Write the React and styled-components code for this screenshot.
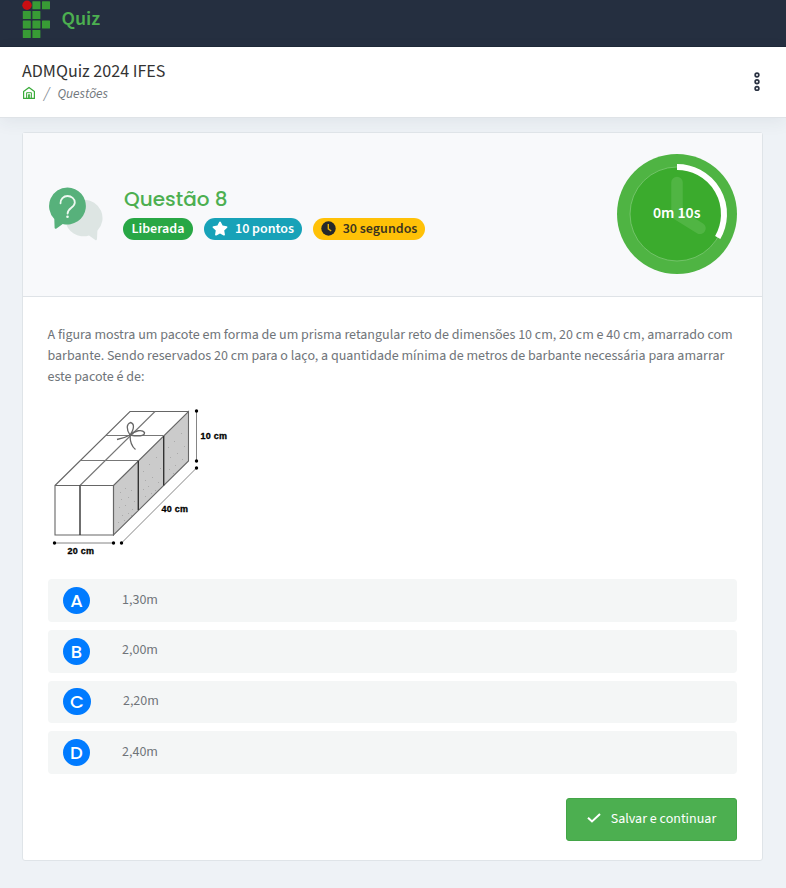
import React from "react";
import styled, { createGlobalStyle } from "styled-components";

const Global = createGlobalStyle`
  *, *::before, *::after { box-sizing: border-box; }
  body {
    margin: 0;
    background: #eef2f6;
    color: #6f7479;
    font-family: "Source Sans 3", "Noto Sans CJK SC", sans-serif;
    font-size: 14px;
    line-height: 21px;
  }
  svg { display: block; flex: none; }
`;

const Page = styled.div`
  min-height: 888px;
  display: flex;
  flex-direction: column;
`;

const TopBar = styled.header`
  height: 47px;
  padding: 0 0 0 22px;
  display: flex;
  align-items: flex-start;
  gap: 10.5px;
  background: #252f40;
  border-bottom: 1px solid #1f2838;
`;

const Brand = styled.span`
  margin-top: 4px;
  color: #4caf50;
  font-size: 20px;
  font-weight: 600;
  line-height: 30px;
`;

const TitleBar = styled.div`
  height: 71px;
  padding: 12px 22px 0 22px;
  display: flex;
  justify-content: space-between;
  background: #fff;
  border-bottom: 1px solid #dfe3e7;
  box-shadow: 0 4px 16px rgba(40, 60, 80, 0.07);
`;

const Title = styled.h1`
  margin: 0;
  color: #333;
  font-size: 18px;
  font-weight: 400;
  line-height: 26px;
`;

const Crumbs = styled.nav`
  display: flex;
  align-items: center;
  height: 18px;
  font-size: 13.5px;
  line-height: 16px;
  font-style: italic;
  color: #74797e;

  svg { margin-top: -2px; }
`;

const Slash = styled.span`
  margin: -2px 8px 0 8px;
  font-size: 16px;
  color: #868e96;
`;

const MenuButton = styled.button`
  width: 14px;
  height: 22px;
  margin-top: 12px;
  padding: 0;
  border: 0;
  background: none;
`;

const Card = styled.main`
  width: 741px;
  height: 729px;
  margin: 14px 0 0 21.5px;
  display: flex;
  flex-direction: column;
  background: #fff;
  border: 1px solid #dfe4e8;
  border-radius: 3px;
`;

const CardHeader = styled.div`
  height: 164px;
  flex: none;
  padding: 0 24.5px 0 26px;
  display: flex;
  align-items: center;
  background: #f8f9fb;
  border-bottom: 1px solid #dfe3e7;
`;

const HeaderRow = styled.div`
  flex: 1;
  margin-top: -1px;
  display: flex;
  align-items: center;
`;

const Heading = styled.div`
  flex: 1;
  margin: 0 0 2px 20.5px;
`;

const QuestionTitle = styled.h2`
  margin: 0 0 7px 1px;
  color: #4caf50;
  font-family: "Poppins", sans-serif;
  font-size: 20px;
  font-weight: 500;
  line-height: 24px;
`;

const Badges = styled.div`
  display: flex;
  gap: 11px;
`;

const Badge = styled.span`
  height: 22px;
  width: ${(p) => p.$width};
  display: flex;
  align-items: center;
  justify-content: center;
  gap: 7px;
  border-radius: 11px;
  background: ${(p) => p.$bg};
  color: ${(p) => p.$fg || "#fff"};
  font-size: 14px;
  font-weight: 600;
  line-height: 22px;
  white-space: nowrap;
`;

const Body = styled.div`
  padding: 27.5px 25px 0;
  display: flex;
  flex-direction: column;
`;

const Statement = styled.p`
  margin: 0;
  letter-spacing: -0.01px;
`;

const Figure = styled.div`
  margin: 17.5px 0 19px;
`;

const Options = styled.div`
  display: flex;
  flex-direction: column;
  gap: 8px;
`;

const Option = styled.div`
  height: 42.75px;
  padding-left: 15.5px;
  display: flex;
  align-items: center;
  gap: 32px;
  border-radius: 4px;
  background: #f4f6f6;
`;

const Letter = styled.span`
  height: 27px;
  min-width: 27px;
  padding: 0 7px;
  display: flex;
  align-items: center;
  justify-content: center;
  border-radius: 14px;
  background: #007bff;
  color: #fff;
  font-family: "Poppins", sans-serif;
  font-size: 18px;
  font-weight: 500;
  line-height: 27px;
`;

const Answer = styled.span`
  margin-top: -0.5px;
`;

const SaveButton = styled.button`
  align-self: flex-end;
  width: 171px;
  height: 43px;
  margin-top: 24px;
  padding: 0 0 1px 1px;
  display: flex;
  align-items: center;
  justify-content: center;
  gap: 10px;
  border: 1px solid #43a547;
  border-radius: 3px;
  background: #4caf50;
  color: #fff;
  font: inherit;

  svg { margin-bottom: 2px; }
`;

const Logo = () => (
  <svg width="29" height="40" viewBox="22 0 29 40" fill="#389b35">
    <circle cx="27" cy="5.3" r="4.7" fill="#c90e12" />
    {[[1, 1.3], [2, 1.3], [0, 11], [1, 11], [0, 20.5], [1, 20.5], [2, 20.5], [0, 30], [1, 30]].map(([c, y]) => (
      <rect key={`${c}-${y}`} x={22.8 + c * 9.6} y={y} width="8" height="8" rx=".5" />
    ))}
  </svg>
);

const HomeIcon = () => (
  <svg width="14" height="14" viewBox="0 0 14 14" fill="none" stroke="#3aab3a" strokeWidth="1.2" strokeLinejoin="round">
    <path d="M1.600 5.400 7 1.400l5.400 4v7H1.600z" />
    <path d="M4.600 12.300V6.700h4.800v5.600M6.400 12V8.700h1.300V12" strokeWidth="1" />
  </svg>
);

const DotsIcon = () => (
  <svg width="14" height="22" viewBox="0 0 14 22" fill="none" stroke="#2a3242" strokeWidth="1.7">
    <circle cx="7" cy="4" r="1.85" />
    <circle cx="7" cy="10.7" r="1.85" />
    <circle cx="7" cy="17.4" r="1.85" />
  </svg>
);

const ChatIcon = () => (
  <svg width="54" height="54" viewBox="49 188 54 54">
    <path d="M84 200.700a18.300 18.300 0 0 1 13.400 31l-.4 8.400q-.2 1.600-1.700.8L89 236.400a18.300 18.300 0 1 1-5-35.700z" fill="#dde5e3" />
    <path d="M67.500 188.500a18.500 18.500 0 1 1-4.800 36.400l-6.200 4.600q-1.700 1-1.900-.8l-.3-8.800a18.500 18.500 0 0 1 13.200-31.400z" fill="#57b17b" />
    <path d="M60.500 204.300c-.2-4.200 3-7.300 7-7.300s7.300 2.900 7.300 6.500c0 5.300-7.200 5.300-7.200 11" fill="none" stroke="#eef8f1" strokeWidth="1.8" strokeLinecap="round" />
    <circle cx="67.5" cy="217.8" r="1.3" fill="#eef8f1" />
  </svg>
);

const StarIcon = () => (
  <svg width="16" height="15" viewBox="0 0 576 512" fill="#fff">
    <path d="M259 18 194 150 48 171c-26 4-37 36-18 55l106 103-25 145c-4 26 24 46 46 34l131-68 131 68c22 12 50-8 46-34l-25-145 106-103c19-19 8-51-18-55l-146-21-65-132c-12-24-46-24-58 0z" />
  </svg>
);

const ClockIcon = () => (
  <svg width="15" height="15" viewBox="0 0 15 15">
    <circle cx="7.5" cy="7.5" r="7.2" fill="#24282b" />
    <path d="M7.300 3v4.800l2.900 2.200" fill="none" stroke="#e8b106" strokeWidth="1.4" />
  </svg>
);

const CheckIcon = () => (
  <svg width="14" height="10" viewBox="0 0 14 10" fill="none" stroke="#fff" strokeWidth="2">
    <path d="m1 4.700 4 3.800 8-7.500" />
  </svg>
);

const Timer = () => (
  <svg width="120" height="120" viewBox="-60 -60 120 120">
    <circle r="60" fill="#4fb443" />
    <circle r="47" fill="#3bab2d" stroke="#77c56e" strokeWidth=".9" />
    <path d="M0-31.500V0L23 14.300" fill="none" stroke="#50b543" strokeWidth="11.5" strokeLinecap="round" strokeLinejoin="round" />
    <path d="M0-47A47 47 0 0 1 40.700 23.500" fill="none" stroke="#fff" strokeWidth="6" />
    <text x="-.3" y="4.3" textAnchor="middle" fill="#fff" fontSize="15.8" fontWeight="600">0m 10s</text>
  </svg>
);

const speckles = [
  [120, 492], [125, 488], [131, 490], [121, 499], [128, 497], [134, 501], [119, 507], [125, 505], [132, 509],
  [122, 515], [128, 513], [118, 522], [124, 520], [143, 471], [149, 464], [156, 457], [145, 480], [152, 477],
  [158, 482], [143, 489], [148, 486], [155, 490], [160, 468], [168, 447], [174, 441], [181, 433], [170, 457],
  [177, 453], [184, 446], [169, 469], [175, 465], [182, 459], [173, 473], [131, 515], [145, 496], [151, 493],
];

const BoxFigure = () => (
  <svg width="185" height="155" viewBox="48 405 185 155" fill="none" stroke="#666" strokeWidth="1.1">
    <path d="M113.500 485.500 188.500 411.500V461L113.500 535z" fill="#cbcbcb" />
    <path d="M55 485.500h58.500V535H55zM55 485.500l75-74h58.500" />
    <path d="M80 485.500l75-74M80.500 460.500h57.500M105 435.500h58.500" stroke="#777" />
    <path d="M80 485.500V535M138.300 460.800V510M163.700 436V485.500" stroke="#333" strokeWidth="1.4" />
    <g fill="#aaa" stroke="none">
      {speckles.map(([x, y]) => <rect key={`${x}-${y}`} x={x} y={y} width="1" height="1" />)}
    </g>
    <path d="M117 439.500c5-1 9-2.200 13-4.500-4-6-3.500-11 .5-12.500 4 1 4 6-.5 12.500 5-4.500 12-6 14.500-2.500.5 4-7 4-14.500 2.500 0 6 1 11 5.500 14.500" stroke="#666" strokeWidth="1.3" />
    <path d="M196.500 411v50M196.500 468l-75 75M54.500 543H113.500" strokeWidth=".8" />
    <g fill="#000" stroke="none">
      {[[196.5, 411], [196.5, 461], [196.5, 468], [121.5, 543], [54.5, 543], [113.5, 543]].map(([x, y]) => (
        <circle key={`${x}-${y}`} cx={x} cy={y} r="1.7" />
      ))}
    </g>
    <g fill="#000" stroke="#000" strokeWidth=".3" fontFamily="Liberation Sans, sans-serif" fontSize="9" fontWeight="700">
      <text x="200.5" y="438.8" textLength="26.5">10 cm</text>
      <text x="161.5" y="512.3" textLength="26.5">40 cm</text>
      <text x="67.5" y="554.3" textLength="26.5">20 cm</text>
    </g>
  </svg>
);

const answers = [["A", "1,30m"], ["B", "2,00m"], ["C", "2,20m"], ["D", "2,40m"]];

export default function App() {
  return (
    <Page>
      <Global />
      <TopBar>
        <Logo />
        <Brand>Quiz</Brand>
      </TopBar>
      <TitleBar>
        <div>
          <Title>ADMQuiz 2024 IFES</Title>
          <Crumbs>
            <HomeIcon />
            <Slash>/</Slash>
            <span>Questões</span>
          </Crumbs>
        </div>
        <MenuButton aria-label="Menu"><DotsIcon /></MenuButton>
      </TitleBar>
      <Card>
        <CardHeader>
          <HeaderRow>
            <ChatIcon />
            <Heading>
              <QuestionTitle>Questão 8</QuestionTitle>
              <Badges>
                <Badge $width="70px" $bg="#28a745">Liberada</Badge>
                <Badge $width="98px" $bg="#17a2b8"><StarIcon />10 pontos</Badge>
                <Badge $width="112px" $bg="#ffc107" $fg="#3a3420"><ClockIcon />30 segundos</Badge>
              </Badges>
            </Heading>
            <Timer />
          </HeaderRow>
        </CardHeader>
        <Body>
          <Statement>
            A figura mostra um pacote em forma de um prisma retangular reto de dimensões 10 cm, 20 cm e 40 cm, amarrado com
            barbante. Sendo reservados 20 cm para o laço, a quantidade mínima de metros de barbante necessária para amarrar
            este pacote é de:
          </Statement>
          <Figure><BoxFigure /></Figure>
          <Options>
            {answers.map(([letter, text]) => (
              <Option key={letter}>
                <Letter>{letter}</Letter>
                <Answer>{text}</Answer>
              </Option>
            ))}
          </Options>
          <SaveButton><CheckIcon />Salvar e continuar</SaveButton>
        </Body>
      </Card>
    </Page>
  );
}
